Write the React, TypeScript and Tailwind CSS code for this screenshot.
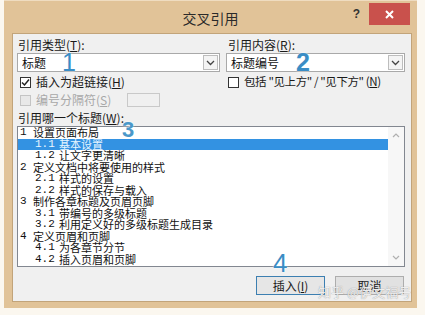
import React from "react";

const items: { n: string; t: string; lvl: number; sel?: boolean }[] = [
  { n: "1", t: "设置页面布局", lvl: 1 },
  { n: "1.1", t: "基本设置", lvl: 2, sel: true },
  { n: "1.2", t: "让文字更清晰", lvl: 2 },
  { n: "2", t: "定义文档中将要使用的样式", lvl: 1 },
  { n: "2.1", t: "样式的设置", lvl: 2 },
  { n: "2.2", t: "样式的保存与载入", lvl: 2 },
  { n: "3", t: "制作各章标题及页眉页脚", lvl: 1 },
  { n: "3.1", t: "带编号的多级标题", lvl: 2 },
  { n: "3.2", t: "利用定义好的多级标题生成目录", lvl: 2 },
  { n: "4", t: "定义页眉和页脚", lvl: 1 },
  { n: "4.1", t: "为各章节分节", lvl: 2 },
  { n: "4.2", t: "插入页眉和页脚", lvl: 2 },
];

function Chevron() {
  return (
    <svg width="9" height="6" viewBox="0 0 9 6">
      <path d="M1 1 L4.5 4.5 L8 1" fill="none" stroke="#444" strokeWidth="1.3" />
    </svg>
  );
}

function Select({ text }: { text: string }) {
  return (
    <div className="h-[19px] bg-white border border-[#a9a9a9] flex items-center justify-between pl-[4px] pr-[1px]">
      <span className="text-[12px] leading-none text-[#111]">{text}</span>
      <div className="w-[15px] h-[15px] border border-[#bdbdbd] bg-[#f4f4f4] flex items-center justify-center">
        <Chevron />
      </div>
    </div>
  );
}

export default function App() {
  return (
    <div className="relative w-[425px] h-[315px] bg-[#fbf7ef] overflow-hidden font-['Noto_Sans_CJK_SC',sans-serif] text-[#1a1a1a]">
      <div className="ml-[4px] w-[413px] h-[308px] bg-[#e1c398] border-t border-[#efdcc0] flex flex-col">
        {/* title bar */}
        <div className="h-[32px] grid grid-cols-[1fr_auto_1fr]">
          <div />
          <div className="pt-[8px] text-[14px] leading-[18px] text-[#2a2a2a]">交叉引用</div>
          <div className="flex justify-end items-start pr-[7px] pt-[2px]">
            <span className="mt-[4px] mr-[9px] text-[12px] font-bold leading-[14px] text-[#333] font-['Liberation_Sans',sans-serif]">?</span>
            <div className="w-[41px] h-[22px] bg-[#c9514c] flex items-center justify-center">
              <svg width="9" height="9" viewBox="0 0 9 9">
                <path d="M1 1 L8 8 M8 1 L1 8" stroke="#fff" strokeWidth="2" />
              </svg>
            </div>
          </div>
        </div>

        {/* panel */}
        <div className="ml-[8px] w-[400px] h-[269px] bg-[#f0f0f0] border border-[#c2a47a] pl-[4px] pr-[6px] pt-[2px] flex flex-col">
          <div className="grid grid-cols-[203px_179px] gap-x-[6px]">
            <div className="flex flex-col">
              <div className="h-[17px] text-[12px] leading-[17px] pl-[1px]">
                引用类型(<span className="underline">T</span>):
              </div>
              <Select text="标题" />
              <div className="mt-[3px] h-[14px] flex items-center pl-[3px] gap-[5px]">
                <div className="w-[11px] h-[11px] border border-[#333] bg-white flex items-center justify-center">
                  <svg width="9" height="9" viewBox="0 0 9 9">
                    <path d="M1 4.5 L3.5 7 L8 1.5" fill="none" stroke="#222" strokeWidth="1.5" />
                  </svg>
                </div>
                <span className="text-[12px] leading-none">
                  插入为超链接(<span className="underline">H</span>)
                </span>
              </div>
              <div className="mt-[4px] h-[14px] flex items-center pl-[3px]">
                <div className="w-[11px] h-[11px] border border-[#c4c4c4] bg-[#e8e8e8]" />
                <span className="ml-[5px] text-[12px] leading-none text-[#a8a8a8]">
                  编号分隔符(<span className="underline">S</span>)
                </span>
                <div className="ml-[16px] w-[33px] h-[14px] border border-[#c9c9c9] bg-[#f0f0f0]" />
              </div>
            </div>
            <div className="flex flex-col">
              <div className="h-[17px] text-[12px] leading-[17px] pl-[2px]">
                引用内容(<span className="underline">R</span>):
              </div>
              <Select text="标题编号" />
              <div className="mt-[3px] h-[14px] flex items-center pl-[2px] gap-[5px] whitespace-nowrap">
                <div className="w-[11px] h-[11px] border border-[#333] bg-white shrink-0" />
                <span className="text-[11.5px] leading-none tracking-[-0.4px]">
                  包括 "见上方" / "见下方" (<span className="underline">N</span>)
                </span>
              </div>
            </div>
          </div>

          <div className="mt-[3px] h-[16px] text-[12px] leading-[16px] pl-[1px]">
            引用哪一个标题(<span className="underline">W</span>):
          </div>

          {/* list box */}
          <div className="w-[388px] h-[141px] border border-[#828790] bg-white flex">
            <div className="flex-1 flex flex-col font-['Liberation_Mono','Noto_Sans_CJK_SC',monospace] text-[11px]">
              {items.map((it) => (
                <div
                  key={it.n}
                  className={
                    "h-[11.5px] leading-[11.5px] flex whitespace-nowrap " +
                    (it.lvl === 1 ? "pl-[2px] " : "pl-[17px] ") +
                    (it.sel ? "bg-[#3392e2] text-[#e8f6ff]" : "text-[#111]")
                  }
                >
                  <span className={it.lvl === 1 ? "w-[13px]" : "w-[24px]"}>{it.n}</span>
                  <span className="font-['Noto_Sans_CJK_SC',sans-serif]">{it.t}</span>
                </div>
              ))}
            </div>
            <div className="w-[16px] bg-[#f7f7f7] flex flex-col justify-between items-center py-[6px]">
              <svg width="8" height="5" viewBox="0 0 8 5">
                <path d="M1 4 L4 1 L7 4" fill="none" stroke="#b0b0b0" strokeWidth="1.2" />
              </svg>
              <svg width="8" height="5" viewBox="0 0 8 5">
                <path d="M1 1 L4 4 L7 1" fill="none" stroke="#b0b0b0" strokeWidth="1.2" />
              </svg>
            </div>
          </div>

          {/* buttons */}
          <div className="mt-[9px] flex justify-end gap-[10px] pr-[1px]">
            <div className="w-[69px] h-[19px] border border-[#3c7fb1] bg-[#e6e6e6] flex items-center justify-center text-[12px] leading-none">
              插入(<span className="underline">I</span>)
            </div>
            <div className="w-[69px] h-[19px] border border-[#adadad] bg-[#e1e1e1] flex items-center justify-center text-[12px] leading-none">
              取消
            </div>
          </div>
        </div>
      </div>

      {/* annotation numbers */}
      <span className="absolute left-[62px] top-[50px] text-[25px] leading-none text-[#3a8dc5] font-['Liberation_Sans',sans-serif] [text-shadow:0_0_2px_#fff]">1</span>
      <span className="absolute left-[296px] top-[50px] text-[25px] leading-none font-bold text-[#3a8dc5] font-['Liberation_Sans',sans-serif] [text-shadow:0_0_2px_#fff]">2</span>
      <span className="absolute left-[122px] top-[119px] text-[22px] leading-none font-bold text-[#4a98c9] font-['Liberation_Sans',sans-serif] [text-shadow:0_0_2px_#fff]">3</span>
      <span className="absolute left-[273px] top-[250px] text-[26px] leading-none text-[#3a8dc5] font-['Liberation_Sans',sans-serif] [text-shadow:0_0_2px_#fff]">4</span>

      {/* watermark */}
      <span className="absolute left-[318px] top-[285px] text-[13px] leading-none text-white/85 [text-shadow:0_0_1px_#777] whitespace-nowrap">
        知乎 @伊文福号
      </span>
    </div>
  );
}
